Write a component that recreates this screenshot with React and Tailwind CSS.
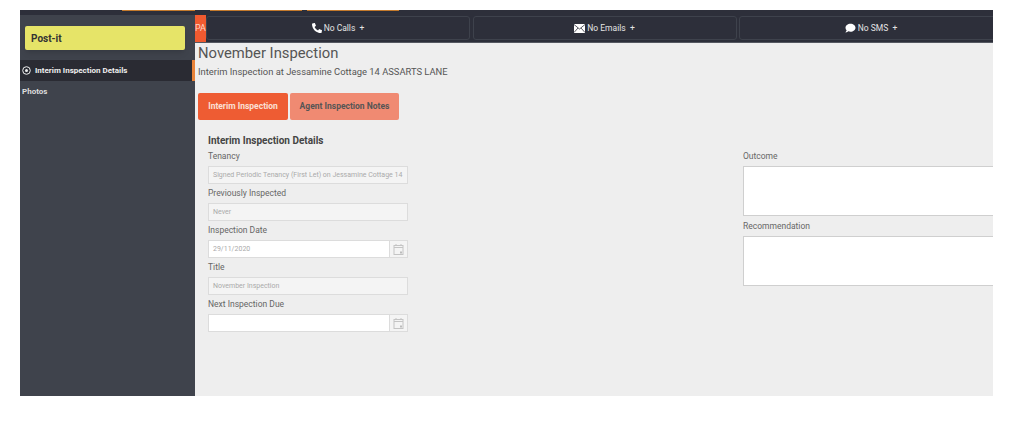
import React from "react";
import { FaPhone, FaComment } from "react-icons/fa";

const Field = ({ label, value, disabled, cal }) => (
  <div>
    <label className="block h-[19px] text-[8.5px] leading-[18px] text-[#666]">{label}</label>
    <div className="flex h-[18px] w-[200px]">
      <div
        className={`flex-1 min-w-0 border border-[#dcdcdc] pl-[4px] text-[7px] leading-[16px] text-[#aaa] whitespace-nowrap ${
          disabled ? "bg-[#f4f4f4]" : "bg-white"
        }`}
      >
        {value}
      </div>
      {cal && (
        <div className="flex w-[18px] items-center justify-center border border-l-0 border-[#dcdcdc] bg-[#f4f4f4]">
          <svg width="11" height="11" viewBox="0 0 11 11" fill="none" stroke="#c4c4c4" strokeWidth="1">
            <rect x="1" y="1.5" width="9" height="9" />
            <path d="M1 3.5h9M3 0v2M8 0v2" />
            <rect x="7" y="7.5" width="2" height="2" fill="#bbb" stroke="none" />
          </svg>
        </div>
      )}
    </div>
  </div>
);

const Stat = ({ icon, label }) => (
  <div className="flex h-[24px] w-[264px] shrink-0 items-center justify-center gap-[2px] rounded-[3px] border border-[#3e424c] bg-[#2d2f3a] text-[8.5px] text-[#e4e4e4]">
    {icon}
    <span>{label} &nbsp;+</span>
  </div>
);

const App = () => {
  return (
    <div className="h-[424px] w-[1009px] bg-white pt-[10px] pl-[20px] font-['Roboto',sans-serif]">
      <div className="flex h-[386px] w-[973px] flex-col overflow-hidden">
        {/* top strip */}
        <div className="flex h-[5px] shrink-0 bg-[#2d2f3a]">
          <div className="ml-[102px] h-[1px] w-[73px] bg-[#c47a2c]" />
          <div className="ml-[15px] h-[1px] w-[92px] bg-[#c47a2c]" />
          <div className="ml-[5px] h-[1px] w-[92px] bg-[#c47a2c]" />
        </div>
        <div className="flex min-h-0 flex-1">
          {/* sidebar */}
          <div className="w-[175px] shrink-0 bg-[#3f434c]">
            <div className="pl-[5px] pr-[10px] pt-[11px] pb-[10px]">
              <div className="flex h-[24px] items-center rounded-[2px] bg-[#e6e468] pl-[6px] text-[10px] font-bold text-[#333] shadow-md">
                Post-it
              </div>
            </div>
            <div className="flex h-[21px] items-center gap-[4px] border-r-[3px] border-[#e8833a] bg-[#2a2b33] pl-[2px] text-[8px] font-bold text-[#eee]">
              <svg width="9" height="9" viewBox="0 0 9 9" fill="none" stroke="#eee">
                <circle cx="4.5" cy="4.5" r="3.8" />
                <circle cx="4.5" cy="4.5" r="1.5" fill="#eee" stroke="none" />
              </svg>
              Interim Inspection Details
            </div>
            <div className="flex h-[21px] items-center pl-[2px] text-[8px] font-bold text-[#ddd]">Photos</div>
          </div>

          {/* main */}
          <div className="min-w-0 flex-1 overflow-hidden bg-[#eeeeee]">
            <div className="flex h-[28px] border-b border-[#555861] bg-[#2d2f3a]">
              <div className="w-[11px] shrink-0 overflow-hidden bg-[#f05a30] text-[9px] leading-[27px] text-[#f8d5c8]">PA</div>
              <div className="flex gap-[2.5px] pt-[1px]">
                <Stat label="No Calls" icon={<FaPhone className="h-[10px] w-[10px] -scale-x-100 text-white" />} />
                <Stat
                  label="No Emails"
                  icon={
                    <svg width="11" height="9" viewBox="0 0 11 9">
                      <rect width="11" height="9" fill="#fff" />
                      <path d="M0 0.5l5.5 4.5L11 0.5M0 8.5l4-4.5M11 8.5l-4-4.5" fill="none" stroke="#2d2f3a" strokeWidth="0.8" />
                    </svg>
                  }
                />
                <Stat label="No SMS" icon={<FaComment className="h-[10px] w-[11px] text-white" />} />
              </div>
            </div>

            <div className="pl-[3px]">
              <h1 className="text-[14.8px] leading-[21px] text-[#555]">November Inspection</h1>
              <p className="text-[9.4px] leading-[16px] text-[#555]">Interim Inspection at Jessamine Cottage 14 ASSARTS LANE</p>
              <div className="mt-[13px] flex gap-[2px] text-[8.5px] font-bold">
                <div className="flex h-[27px] w-[90px] items-center justify-center rounded-[2px] bg-[#ee5c33] text-[#fbe0d6]">
                  Interim Inspection
                </div>
                <div className="flex h-[27px] w-[109px] items-center justify-center rounded-[2px] bg-[#f08a72] text-[#555]">
                  Agent Inspection Notes
                </div>
              </div>
            </div>

            <div className="flex pl-[13px] pt-[14px]">
              <div className="w-[200px]">
                <h2 className="text-[10px] font-bold leading-[13px] text-[#444]">Interim Inspection Details</h2>
                <Field label="Tenancy" value="Signed Periodic Tenancy (First Let) on Jessamine Cottage 14" disabled />
                <Field label="Previously Inspected" value="Never" disabled />
                <Field label="Inspection Date" value="29/11/2020" cal />
                <Field label="Title" value="November Inspection" disabled />
                <Field label="Next Inspection Due" cal />
              </div>
              <div className="ml-[335px] flex-1 pt-[12px]">
                <label className="block h-[20px] text-[8.5px] leading-[20px] text-[#666]">Outcome</label>
                <div className="h-[50px] border border-r-0 border-[#cfcfcf] bg-white" />
                <label className="block h-[20px] text-[8.5px] leading-[20px] text-[#666]">Recommendation</label>
                <div className="h-[50px] border border-r-0 border-[#cfcfcf] bg-white" />
              </div>
            </div>
          </div>
        </div>
      </div>
    </div>
  );
};

export default App;
